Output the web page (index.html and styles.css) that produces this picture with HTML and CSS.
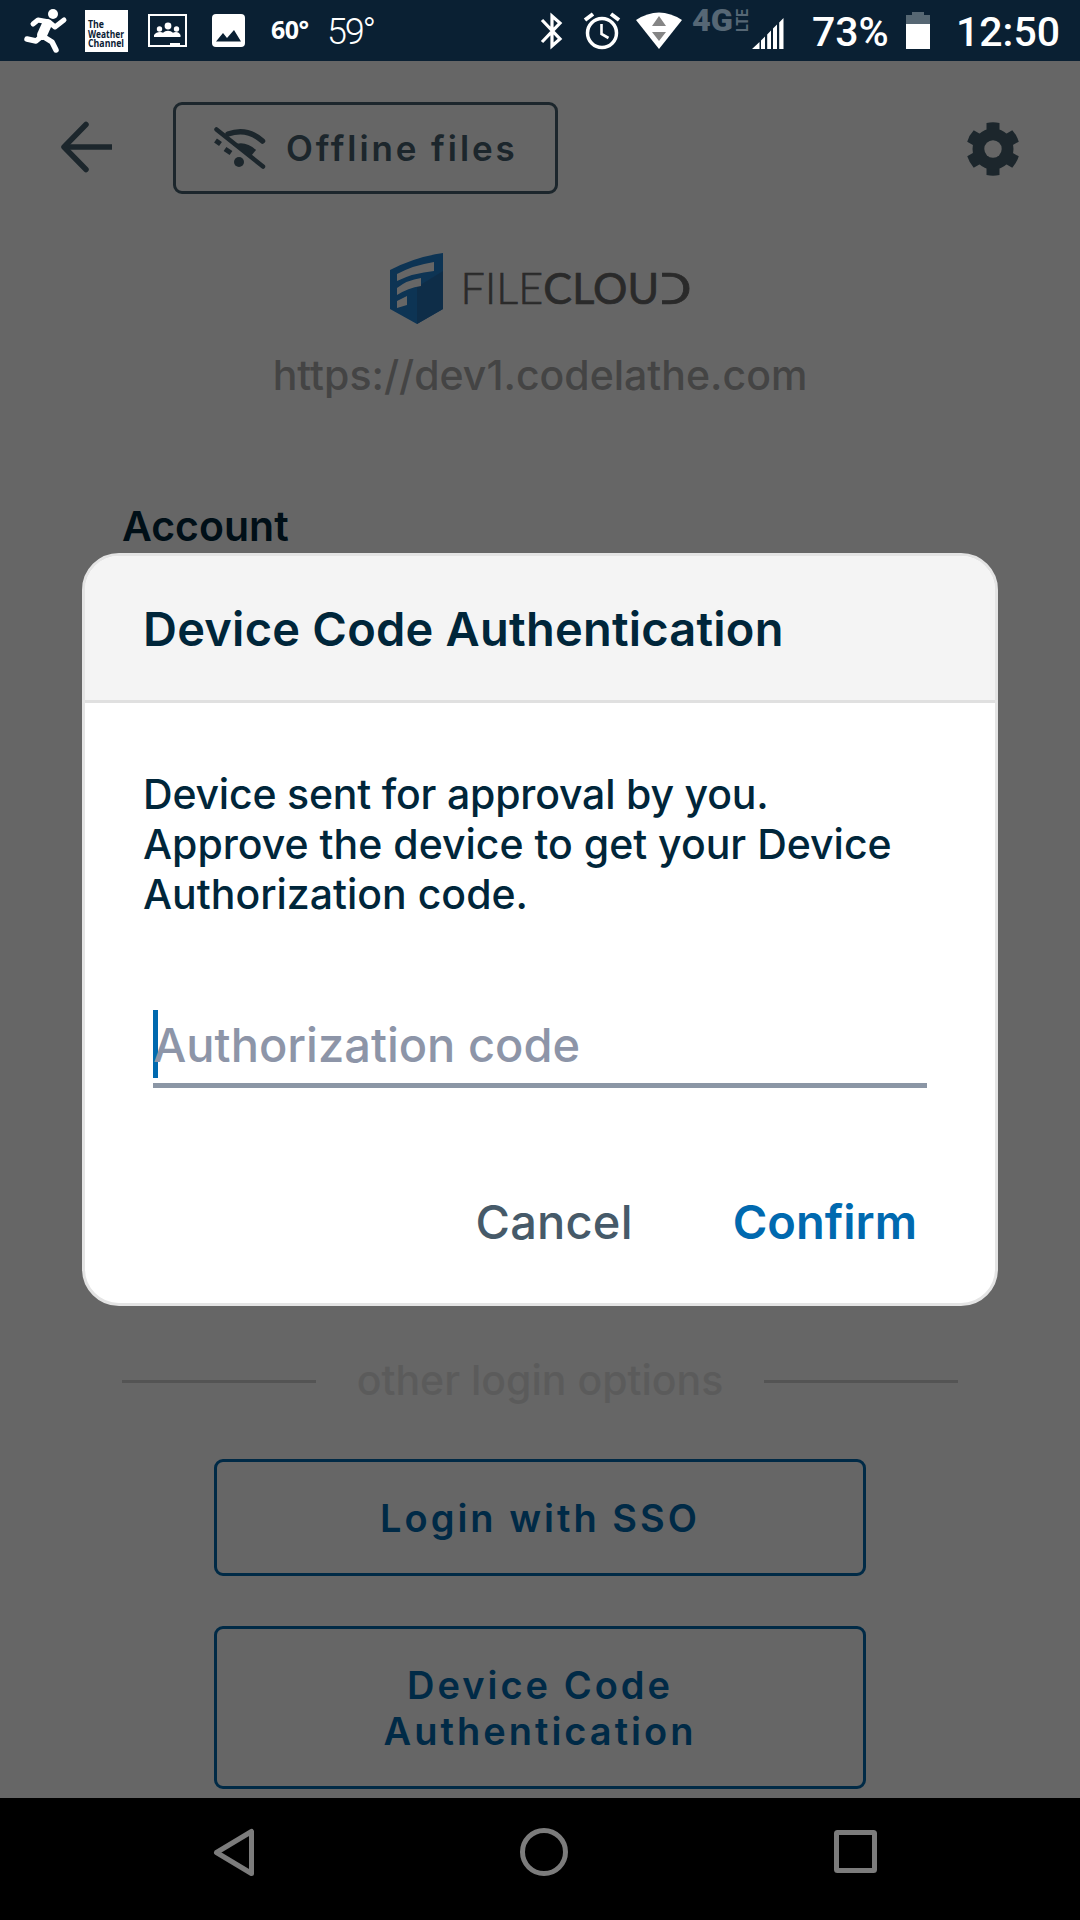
FILE: index.html
```html
<!DOCTYPE html>
<html lang="en">
<head>
<meta charset="utf-8">
<title>FileCloud</title>
<link rel="stylesheet" href="styles.css">
</head>
<body>
<div class="phone">
  <div class="status">
    <div class="status-left">
      <svg class="runner" width="44" height="44" viewBox="0 0 44 44" fill="none" stroke="#fff" stroke-linecap="round" stroke-linejoin="round">
        <circle cx="29" cy="5" r="5" fill="#fff" stroke="none"/>
        <path d="M9 15 L14 11 L25 13 L31 18 L40 11" stroke-width="5"/>
        <path d="M23 15 L18 26" stroke-width="10"/>
        <path d="M18 27 L12 32 L3 30 M20 28 L28 33 L32 41" stroke-width="5.5"/>
      </svg>
      <svg class="weather" width="43" height="42" viewBox="0 0 43 42">
        <rect width="43" height="42" fill="#fff"/>
        <g fill="#0a2033">
          <text x="3" y="18" textLength="16" lengthAdjust="spacingAndGlyphs">The</text>
          <text x="3" y="27.500" textLength="36" lengthAdjust="spacingAndGlyphs">Weather</text>
          <text x="3" y="37" textLength="36" lengthAdjust="spacingAndGlyphs">Channel</text>
        </g>
      </svg>
      <svg class="people" width="39" height="33" viewBox="0 0 39 33" fill="#fff">
        <rect x="1" y="1" width="37" height="31" fill="none" stroke="#fff" stroke-width="2"/>
        <circle cx="20" cy="12" r="3.400"/><circle cx="11.500" cy="15" r="2.700"/><circle cx="28.500" cy="15" r="2.700"/>
        <path d="M6 23v-2q2-3 6-3 2 0 3 .7 2-2 5-2t5 2q1-.7 3-.7 3 0 4.500 3v2zM22 29h10v3H22z"/>
      </svg>
      <svg class="picture" width="33" height="33" viewBox="0 0 33 33">
        <rect width="33" height="33" rx="4" fill="#fff"/>
        <path d="M4 27.500 11 19l4 5 7-8 7 11.500z" fill="#0a2033"/>
      </svg>
      <span class="temp-bold">60°</span>
      <span class="temp-thin">59°</span>
    </div>
    <div class="status-right">
      <svg class="bluetooth" width="24" height="38" viewBox="0 0 24 38" fill="none" stroke="#fff" stroke-width="3.200">
        <path d="M2 8 20 27 12 34V4l8 7L2 30"/>
      </svg>
      <svg class="alarm" width="36" height="37" viewBox="0 0 36 37" fill="none" stroke="#fff">
        <circle cx="18" cy="21" r="14.500" stroke-width="3.500"/>
        <path d="M17.500 12v10l7 4" stroke-width="2.600"/>
        <path d="M1 8 9 2M35 8 27 2" stroke-width="4"/>
      </svg>
      <svg class="wifi" width="46" height="37" viewBox="0 0 46 37">
        <path d="M23 37 0 8Q23-7 46 8z" fill="#fff"/>
        <path d="M23 4l7 10H16zM16 20h14l-7 9z" fill="#858585"/>
      </svg>
      <svg class="network" width="58" height="40" viewBox="0 0 58 40" fill="#566775">
        <text x="-1" y="30" class="net-4g" textLength="41" lengthAdjust="spacingAndGlyphs">4G</text>
        <text class="net-lte" transform="translate(55 31) rotate(-90)" textLength="23" lengthAdjust="spacingAndGlyphs">LTE</text>
      </svg>
      <svg class="signal" width="32" height="31" viewBox="0 0 32 31" fill="#fff">
        <path d="M0 31 7.500 24v7zM9 22.500l4-4V31H9zM15.200 16.500l3.800-4V31h-3.800zM21 10.500l4-4V31h-4zM27.200 4.500 31.500 0v31h-4.300z"/>
      </svg>
      <span class="percent">73%</span>
      <svg class="battery" width="24" height="37" viewBox="0 0 24 37">
        <path d="M0 3h6V0h12v3h6v10H0z" fill="#566773"/>
        <path d="M0 12h24v25H0z" fill="#fff"/>
      </svg>
      <span class="clock">12:50</span>
    </div>
  </div>

  <div class="app">
    <div class="toolbar">
      <svg class="back" width="52" height="52" viewBox="0 0 52 52" fill="none" stroke="#46606e" stroke-width="5.500" stroke-linejoin="round">
        <path d="M51 26H4"/><path d="M25 3.500 3 26 25 48.500" stroke-linecap="round"/>
      </svg>
      <div class="offline">
        <svg width="52" height="42" viewBox="0 0 52 42" fill="none" stroke="#46606e">
          <path d="M14 7Q33 0 48.500 14" stroke-width="5.500" stroke-linecap="round"/>
          <path d="M19 18Q31 13 42 23L37 29z" fill="#46606e" stroke="none"/>
          <path d="M2.500 2.500 49 39.500" stroke-width="4.500" stroke-linecap="round"/>
          <path d="M1.500 13.500l5 3.500M11 22l6 4" stroke-width="5"/>
          <circle cx="25" cy="35" r="5" fill="#46606e" stroke="none"/>
        </svg>
        <span>Offline files</span>
      </div>
      <svg class="gear" width="52" height="54" viewBox="-26 -27 52 54">
        <g fill="#46606e">
          <path id="tooth" d="M-6.500 0V-26Q0-27.500 6.500-26V0z"/>
          <use href="#tooth" transform="rotate(60)"/><use href="#tooth" transform="rotate(120)"/>
          <use href="#tooth" transform="rotate(180)"/><use href="#tooth" transform="rotate(240)"/>
          <use href="#tooth" transform="rotate(300)"/>
          <circle r="20.500"/>
        </g>
        <circle r="8.700" fill="#fff"/>
      </svg>
    </div>

    <div class="brand">
      <svg width="54" height="72" viewBox="0 0 54 72">
        <path d="M0 17Q25 4 53 0V56L27 71 0 56z" fill="#2182d2"/>
        <path d="M27 34L53 18V56L27 71z" fill="#2571b5"/>
        <path d="M7 21Q24 12 44 9v9Q23 20 7 28zM7 35Q17 27 31 25v8Q18 35 7 42zM7 48l10-5v9L7 55z" fill="#fff"/>
      </svg>
      <div class="wordmark"><span class="light">FILE</span>CLOU<span class="open-d">D</span></div>
    </div>
    <div class="url">https://dev1.codelathe.com</div>
    <div class="account">Account</div>

    <div class="options"><i></i><span>other login options</span><i></i></div>
    <div class="login">Login with SSO</div>
    <div class="login device">Device Code<br>Authentication</div>
  </div>

  <div class="scrim">
    <div class="dialog">
      <div class="title">Device Code Authentication</div>
      <div class="content">
        <p><span class="tight">Device sent for approval by you.</span><br>Approve the device to get your Device<br>Authorization code.</p>
        <div class="field"><b class="caret"></b>Authorization code</div>
        <div class="actions"><span class="cancel">Cancel</span><span class="confirm">Confirm</span></div>
      </div>
    </div>
  </div>

  <div class="nav">
    <svg width="42" height="50" viewBox="0 0 42 50"><path d="M38.500 3.500v42L3.500 24.500z"/></svg>
    <svg width="48" height="48" viewBox="0 0 48 48"><circle cx="23" cy="24" r="21.500"/></svg>
    <svg class="recent" width="43" height="43" viewBox="0 0 43 43"><rect x="2.500" y="2.500" width="38" height="38" rx="1"/></svg>
  </div>
</div>
</body>
</html>
```
FILE: styles.css
```css
* { box-sizing: border-box; }
body { margin: 0; font-family: Inter, "Liberation Sans", sans-serif; }
svg { display: block; flex: none; overflow: visible; }
.phone { position: relative; width: 1080px; height: 1920px; overflow: hidden; display: flex; flex-direction: column; background: #000; }

.status { height: 61px; flex: none; display: flex; justify-content: space-between; background: #0a2033; color: #fff; }
.status-left, .status-right { display: flex; align-items: flex-start; white-space: nowrap; }
.status-left { padding-left: 24px; }
.runner { margin-top: 9px; }
.weather { margin: 10px 0 0 17px; font: 700 10px "Open Sans", sans-serif; }
.people { margin: 14px 0 0 20px; }
.picture { margin: 14px 0 0 25px; }
.temp-bold { width: 56px; margin: 13px 0 0 26px; font: 700 25px/33px "Noto Sans", sans-serif; letter-spacing: -0.500px; }
.temp-thin { margin-top: 11px; font: 300 36px/42px Roboto, sans-serif; letter-spacing: -2.200px; }
.status-right { width: 540px; }
.bluetooth { margin-top: 12px; }
.alarm { margin: 12px 0 0 20px; }
.wifi { margin: 12px 0 0 16px; }
.network { margin: 1px 0 0 11px; }
.net-4g { font: 900 32px Roboto, sans-serif; }
.net-lte { font: 700 17px Roboto, sans-serif; }
.signal { margin: 18px 0 0 1px; }
.percent { width: 94px; margin: 8px 0 0 28px; font: 500 41px/48px Roboto, sans-serif; }
.battery { margin-top: 12px; }
.clock { margin: 8px 0 0 26px; font: 500 41px/48px Roboto, sans-serif; }

.app { height: 1737px; flex: none; display: flex; flex-direction: column; align-items: center; background: #fff; }
.toolbar { width: 100%; height: 133px; padding: 41px 61px 0; display: flex; align-items: flex-start; }
.back { margin-top: 19px; }
.offline { width: 385px; height: 92px; margin-left: 60px; padding-left: 38px; display: flex; align-items: center; gap: 20px; border: 3px solid #46606e; border-radius: 9px; color: #46606e; font-size: 35px; font-weight: 600; letter-spacing: 2.900px; white-space: nowrap; }
.gear { margin: 20px 0 0 auto; }
.brand { height: 72px; margin-top: 59px; width: 301px; display: flex; gap: 17px; }
.wordmark { padding-top: 9px; font: 400 43px/52px Lato, sans-serif; color: #696969; white-space: nowrap; letter-spacing: 0.150px; -webkit-text-stroke: 0.700px #696969; }
.light { font-weight: 300; }
.open-d { display: inline-block; clip-path: inset(0 0 0 9px); transform: scaleX(1.250); transform-origin: right; }
.url { margin-top: 25px; font-size: 41px; line-height: 50px; color: #aaa; font-weight: 500; }
.account { align-self: flex-start; margin: 100px 0 0 122px; font-size: 41px; line-height: 52px; font-weight: 600; color: #00263a; }
.options { width: 836px; margin-top: 803px; display: flex; align-items: center; justify-content: space-between; font-size: 41px; line-height: 50px; font-weight: 500; color: #e4e4e4; }
.options i { width: 194px; height: 3px; margin-top: 2px; background: #d2d2d2; }
.login { width: 652px; height: 117px; flex: none; margin-top: 54px; padding-top: 33px; border: 3px solid #0069af; border-radius: 9px; text-align: center; font-size: 38px; line-height: 46px; font-weight: 600; letter-spacing: 3px; color: #0069af; }
.device { height: 163px; margin-top: 50px; }

.scrim { position: absolute; top: 61px; left: 0; width: 1080px; height: 1737px; padding-top: 492px; background: rgba(0, 0, 0, .6); }
.dialog { width: 916px; height: 753px; margin: 0 auto; overflow: hidden; border: 3px solid #e4e4e4; border-radius: 37px; background: #fff; }
.title { height: 147px; padding: 45px 58px 0; border-bottom: 3px solid #e0e0e0; background: #f4f4f4; color: #00263a; font-size: 47px; line-height: 56px; font-weight: 600; letter-spacing: 0.220px; white-space: nowrap; }
.content { padding: 66px 68px 0 58px; }
.content p { margin: 0; color: #00263a; font-size: 41px; line-height: 50px; font-weight: 500; white-space: nowrap; }
.tight { letter-spacing: -0.200px; }
.field { position: relative; z-index: 0; width: 774px; height: 78px; margin: 91px 0 0 10px; padding-top: 7px; border-bottom: 5px solid #8b96a5; color: #8d95a8; font-size: 47px; line-height: 56px; font-weight: 500; }
.caret { position: absolute; z-index: -1; left: 0; top: 0; width: 5px; height: 68px; background: #0069af; }
.actions { display: flex; justify-content: flex-end; gap: 100px; margin: 106px 10px 0 0; font-size: 47px; line-height: 56px; font-weight: 500; }
.cancel { color: #465a69; letter-spacing: 0.200px; }
.confirm { color: #0069af; font-weight: 600; }

.nav { flex: 1; padding: 30px 203px 0 213px; display: flex; justify-content: space-between; align-items: flex-start; }
.nav svg { fill: none; stroke: #7c7c7c; stroke-width: 5; stroke-linejoin: round; }
.nav .recent { margin-top: 2px; }
```
